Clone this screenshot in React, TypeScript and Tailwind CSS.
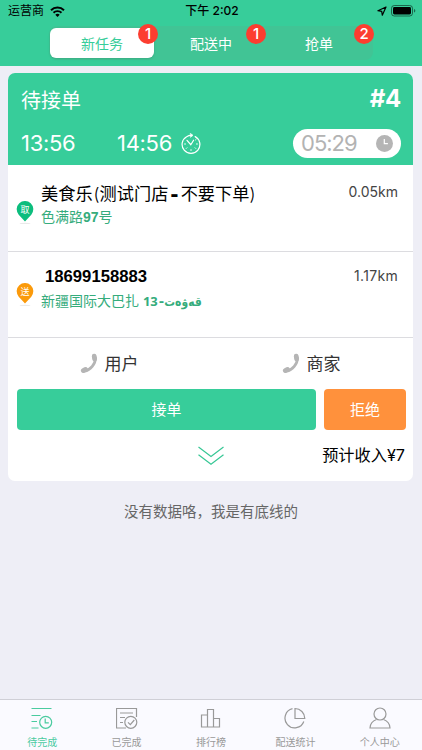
import type { ReactNode } from 'react';

const segments = [
  { label: '新任务', badge: 1 },
  { label: '配送中', badge: 1 },
  { label: '抢单', badge: 2 },
];

function WifiIcon() {
  return (
    <svg width="15" height="11" viewBox="0 0 15 11" fill="none" stroke="#000">
      <path d="M1 4.2a9.3 9.3 0 0 1 13 0" strokeWidth="2" />
      <path d="M3.5 6.8a5.7 5.7 0 0 1 8 0" strokeWidth="1.9" />
      <path d="M7.5 11 5.3 8.8a3.1 3.1 0 0 1 4.4 0z" fill="#000" stroke="none" />
    </svg>
  );
}

function LocationIcon() {
  return (
    <svg width="10" height="10" viewBox="0 0 10 10" fill="none" stroke="#000" strokeWidth="1.2" strokeLinejoin="round">
      <path d="M9 1 .9 4.7l3.8.6.6 3.9z" />
    </svg>
  );
}

function BatteryIcon() {
  return (
    <svg width="25" height="12" viewBox="0 0 25 12">
      <rect x=".5" y=".5" width="21" height="10.5" rx="2.8" fill="none" stroke="#000" strokeOpacity=".5" />
      <rect x="2" y="2" width="18" height="7.5" rx="1.4" />
      <path d="M23 4v3.6c.9-.3 1.3-1 1.3-1.8S23.900 4.300 23 4z" fillOpacity=".5" />
    </svg>
  );
}

function TimerIcon() {
  return (
    <svg width="20" height="21" viewBox="0 0 20 21" fill="none" stroke="#fff" strokeWidth="1.2" strokeLinecap="round">
      <path d="M14.200 3.600a8.900 8.900 0 1 1-8.600.1c1.300-.8 2.700-1.400 4.400-1.400" />
      <path d="M9.600.6 12 2.300 9.800 4.100z" fill="#fff" strokeWidth=".7" />
      <path d="m6 7.300 3.800 4.400L12.600 7.200" />
      <path d="M3.600 11h.9M15.500 11h.9M10 16.600v.9M5.300 15.400l.6-.6M14.700 15.400l-.6-.6M15 6.500l-.5.4" strokeWidth="1" />
    </svg>
  );
}

function PinIcon({ color, children }: { color: string; children: ReactNode }) {
  return (
    <svg width="18" height="24" viewBox="0 0 18 24">
      <ellipse cx="9" cy="22.400" rx="5.500" ry=".6" fill="#e9e9e9" />
      <path d="M9 20.500 2.700 13.700a8.300 8.300 0 1 1 12.600 0z" fill={color} />
      <text x="9" y="11.500" textAnchor="middle" fontSize="9" fill="#fff">
        {children}
      </text>
    </svg>
  );
}

function PhoneIcon() {
  return (
    <svg width="18" height="21" viewBox="0 0 18 21" fill="none" stroke="#b5b5b5" strokeLinecap="round">
      <path d="M15.500 5C15.500 10.800 10.500 17 4.500 18.200" strokeWidth="2.800" />
      <path d="m14.200 3.200.4 2.800" strokeWidth="4.800" />
      <path d="m3.300 17.600 2.200-1.200" strokeWidth="4.800" />
    </svg>
  );
}

function PendingIcon() {
  return (
    <>
      <path d="M.5 1.500h20M.5 8.500h9M.5 14.500h5.500M.5 21h7" />
      <circle cx="14.700" cy="15.300" r="6" />
      <path d="M14.200 11.500v4.300h3.600" />
    </>
  );
}

function DoneIcon() {
  return (
    <>
      <path d="M20.500 10V1.500H.5V21h9.500M4 6h13M4 10.500h5M4 15.500h3" />
      <circle cx="14.800" cy="15.300" r="6" />
      <path d="m12 15.300 2.300 2.300 4-4.600" />
    </>
  );
}

function RankIcon() {
  return (
    <path d="M1.500 8h6v12h-6zM7.500 2.500h6V20h-6zM13.500 11.500h6V20h-6z" />
  );
}

function StatsIcon() {
  return (
    <>
      <path d="M8.500 1.700a9.700 9.700 0 1 0 11.300 12.800" />
      <path d="M11 1.500V11.500h9.800A10 10 0 0 0 11 1.500z" />
    </>
  );
}

function ProfileIcon() {
  return (
    <>
      <circle cx="11" cy="7" r="6" />
      <path d="M7.500 12.500C3.800 13.800 1.200 16.800 1 21h20c-.2-4.200-2.800-7.200-6.500-8.500" />
    </>
  );
}

const tabs = [
  { label: '待完成', icon: <PendingIcon />, active: true },
  { label: '已完成', icon: <DoneIcon /> },
  { label: '排行榜', icon: <RankIcon /> },
  { label: '配送统计', icon: <StatsIcon /> },
  { label: '个人中心', icon: <ProfileIcon /> },
];

function StatusBar() {
  return (
    <div className="flex h-[22px] items-center pl-[8px] pr-[6px] text-[12px] text-black">
      <div className="flex flex-1 items-center gap-[6px]">
        <span>运营商</span>
        <WifiIcon />
      </div>
      <span className="font-medium">下午 2:02</span>
      <div className="flex flex-1 items-center justify-end gap-[4px]">
        <LocationIcon />
        <BatteryIcon />
      </div>
    </div>
  );
}

function Segments() {
  return (
    <div className="mx-auto mt-1 flex h-[34px] w-[324px] rounded-lg bg-[#41c495] py-[2px]">
      {segments.map((s) => (
        <div key={s.label} className="relative w-[108px] shrink-0 px-[1px] pr-[3px]">
          <div
            className={`flex h-[30px] items-center justify-center rounded-[6px] text-[14px] ${
              s.label === '新任务' ? 'bg-white text-[#37cd9a] shadow-sm' : 'pl-[2px] text-white'
            }`}
          >
            {s.label}
          </div>
          <span className="absolute -top-[4px] -right-[1px] flex size-5 items-center justify-center rounded-full bg-[#fc3d30] text-[15px] font-medium text-white">
            {s.badge}
          </span>
        </div>
      ))}
    </div>
  );
}

function OrderCard() {
  return (
    <div className="ml-[8px] mt-[7px] w-[405px] overflow-hidden rounded-[7px] bg-white">
      <div className="h-[92px] bg-[#37cd9a] pl-[13px] pr-[12px] text-white">
        <div className="flex h-[54px] items-center justify-between">
          <span className="pt-[2px] text-[20px]">待接单</span>
          <span className="pb-[2px] text-[24px] font-bold tracking-[-0.3px]">#4</span>
        </div>
        <div className="flex h-[32px] items-center text-[22px] tracking-[-0.3px]">
          <span className="w-[96px]">13:56</span>
          <span className="w-[64px]">14:56</span>
          <TimerIcon />
          <div className="ml-auto flex h-[29px] w-[108px] items-center justify-between rounded-full bg-white px-[8px] text-[#b3b3b3]">
            <span className="tracking-[-1px]">05:29</span>
            <svg width="17" height="17" viewBox="0 0 17 17" fill="none">
              <circle cx="8.500" cy="8.500" r="8.500" fill="#b5b5b5" />
              <path d="M8.300 4v4.700h3.600" stroke="#fff" strokeWidth="1.200" />
            </svg>
          </div>
        </div>
      </div>

      {/* pick-up */}
      <div className="flex h-[87px] border-b border-[#dcdce0] pl-[8px] pr-[15px] pt-[14px]">
        <div className="mt-[22px] w-[25px]">
          <PinIcon color="#0cbd7d">取</PinIcon>
        </div>
        <div className="flex-1">
          <div className="flex h-[28px] items-center whitespace-nowrap pt-[1px] text-[17.200px] text-black">
            美食乐<span className="pl-px font-light">(</span>测试门店
            <b className="px-[2px] font-['DejaVu_Sans'] text-[20px] leading-none">-</b>
            不要下单<span className="font-light">)</span>
          </div>
          <div className="text-[14px] leading-[20px] text-[#35ac7c]">
            色满路<b className="font-['Liberation_Sans'] text-[14px]">97</b>号
          </div>
        </div>
        <span className="h-[26px] text-[14px] leading-[26px] text-[#444]">0.05km</span>
      </div>

      {/* drop-off */}
      <div className="flex h-[86px] border-b border-[#dcdce0] pl-[8px] pr-[15px] pt-[11px]">
        <div className="mt-[20px] w-[25px]">
          <PinIcon color="#fb9a0b">送</PinIcon>
        </div>
        <div className="flex-1">
          <div className="h-[27px] pl-[4px] font-['Liberation_Sans'] text-[16.700px] font-bold leading-[28px] text-black">18699158883</div>
          <div className="whitespace-nowrap text-[14px] leading-[22px] text-[#35ac7c]">
            新疆国际大巴扎{' '}
            <b className="font-['Noto_Sans'] text-[13px]">
              13<span className="pl-px font-['DejaVu_Sans']">-</span>
            </b>
            <b className="font-['DejaVu_Sans_Condensed','DejaVu_Sans'] text-[12px]">قەۋەت</b>
          </div>
        </div>
        <span className="h-[26px] text-[14px] leading-[26px] tracking-[0.3px] text-[#444]">1.17km</span>
      </div>

      <div className="flex h-[51px] pr-px text-[17px] text-[#333]">
        <div className="flex flex-1 items-center justify-center gap-[7px]">
          <PhoneIcon />
          <span className="pt-[2px]">用户</span>
        </div>
        <div className="flex flex-1 items-center justify-center gap-[7px]">
          <PhoneIcon />
          <span className="pt-[2px]">商家</span>
        </div>
      </div>

      <div className="flex h-[41px] gap-2 pl-[9px] pr-[7px] text-[15px] text-white">
        <button className="flex-1 rounded-[4px] bg-[#37cd9a] pt-[2px]">接单</button>
        <button className="w-[82px] rounded-[4px] bg-[#ff913c] pt-[2px]">拒绝</button>
      </div>

      <div className="grid h-[51px] grid-cols-[1fr_auto_1fr] items-center px-[8px]">
        <svg className="col-start-2" width="26" height="20" viewBox="0 0 26 20" fill="none" stroke="#37c795" strokeWidth="1.200">
          <path d="m.5 1 12.500 9.500L25.500 1M.5 8.700 13 18.300l12.500-9.600" />
        </svg>
        <span className="text-right text-[16.200px] text-black">预计收入¥7</span>
      </div>
    </div>
  );
}

export default function App() {
  return (
    <div className="flex h-[750px] w-[422px] flex-col overflow-hidden bg-[#eeeef6] font-['Inter','Noto_Sans_CJK_SC',sans-serif]">
      <header className="h-[66px] bg-[#37cd9a]">
        <StatusBar />
        <Segments />
      </header>

      <main className="flex-1">
        <OrderCard />
        <p className="mt-[20px] text-center text-[14.500px] leading-[22px] text-[#666]">没有数据咯，我是有底线的</p>
      </main>

      <nav className="flex h-[51px] border-t border-[#cfcfd6] bg-[#fafaff]">
        {tabs.map((t) => (
          <div
            key={t.label}
            className={`flex flex-1 flex-col items-center pt-[7px] text-[10px] ${t.active ? 'text-[#4acb9f]' : 'text-[#999]'}`}
          >
            <svg width="22" height="23" viewBox="0 0 22 23" fill="none" stroke="currentColor" strokeWidth="1.200">
              {t.icon}
            </svg>
            <span className="mt-[4px] leading-[16px]">{t.label}</span>
          </div>
        ))}
      </nav>
    </div>
  );
}
